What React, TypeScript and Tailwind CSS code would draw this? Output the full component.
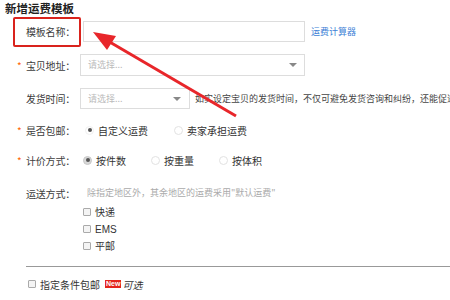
import React from 'react';

const FONT = { fontFamily: '"Noto Sans CJK SC", "Noto Sans", sans-serif' };

const Star = ({ show = true }: { show?: boolean }) => (
  <span className="w-[9px] text-[10px] leading-none text-[#f60] pt-[2px]">{show ? '*' : ''}</span>
);

const Label = ({ text, star = false }: { text: string; star?: boolean }) => (
  <div className="flex items-center w-[80px] shrink-0 pl-[17px]">
    <Star show={star} />
    <span className="text-[10px] text-[#3c3c3c] tracking-[-0.2px]">{text}</span>
  </div>
);

const Caret = () => (
  <span className="w-0 h-0 border-l-[4px] border-r-[4px] border-t-[4px] border-l-transparent border-r-transparent border-t-[#888]" />
);

const Select = ({ width, caretRight }: { width: string; caretRight: string }) => (
  <div className={`${width} shrink-0 h-full border border-[#ddd] bg-white flex items-center pl-[7px] ${caretRight}`}>
    <span className="flex-1 text-[9px] text-[#bbb]">请选择...</span>
    <Caret />
  </div>
);

const Radio = ({ checked = false, filled = false, label }: { checked?: boolean; filled?: boolean; label: string }) => (
  <div className="flex items-center gap-[4px]">
    <span
      className={`w-[9px] h-[9px] rounded-full border flex items-center justify-center ${
        filled ? 'bg-[#d8d8d8] border-[#c8c8c8]' : checked ? 'bg-white border-[#f0f0f0]' : 'bg-white border-[#e2e2e2]'
      }`}
    >
      {checked && <span className="w-[4px] h-[4px] rounded-full bg-[#555]" />}
    </span>
    <span className="text-[10px] text-[#333]">{label}</span>
  </div>
);

const Check = ({ label }: { label: string }) => (
  <div className="flex items-center gap-[4px] h-[16px] mt-[1px] pl-[83px]">
    <span className="w-[8px] h-[8px] border border-[#aaa] rounded-[1px] bg-[#f4f4f4]" />
    <span className="text-[10px] text-[#333]" style={{ fontFamily: '"Liberation Sans", "Noto Sans CJK SC", sans-serif' }}>{label}</span>
  </div>
);

export default function App() {
  return (
    <div className="relative w-[450px] h-[300px] bg-white overflow-hidden" style={FONT}>
      <div className="h-[16px] pl-[5px] pt-[1px] text-[11.5px] font-bold text-[#222] leading-[14px]">新增运费模板</div>

      <div className="flex items-center h-[21px] mt-[5px]">
        <Label text="模板名称：" />
        <div className="w-[222px] shrink-0 h-full border border-[#ddd] ml-[3px]" />
        <a className="ml-[6px] text-[9px] text-[#3d7fd6]">运费计算器</a>
      </div>

      <div className="flex items-center h-[22px] mt-[12px]">
        <Label text="宝贝地址：" star />
        <Select width="w-[225px]" caretRight="pr-[7px]" />
      </div>

      <div className="flex items-center h-[21px] mt-[12px]">
        <Label text="发货时间：" />
        <Select width="w-[110px]" caretRight="pr-[8px]" />
        <span className="ml-[5px] text-[9px] text-[#444] whitespace-nowrap">如实设定宝贝的发货时间，不仅可避免发货咨询和纠纷，还能促进成交</span>
      </div>

      <div className="flex items-center h-[20px] mt-[11px]">
        <Label text="是否包邮：" star />
        <div className="flex items-center gap-[26px] ml-[5px]">
          <Radio checked label="自定义运费" />
          <Radio label="卖家承担运费" />
        </div>
      </div>

      <div className="flex items-center h-[20px] mt-[10px]">
        <Label text="计价方式：" star />
        <div className="flex items-center gap-[25px] ml-[3px]">
          <Radio checked filled label="按件数" />
          <Radio label="按重量" />
          <Radio label="按体积" />
        </div>
      </div>

      <div className="flex items-center h-[20px] mt-[13px]">
        <Label text="运送方式：" />
        <span className="ml-[7px] text-[9px] text-[#aaa] whitespace-nowrap">除指定地区外，其余地区的运费采用"默认运费"</span>
      </div>

      <Check label="快递" />
      <Check label="EMS" />
      <Check label="平邮" />

      <div className="ml-[26px] mt-[12px] h-px bg-[#999]" />

      <div className="flex items-center h-[16px] mt-[9px] pl-[28px] gap-[4px]">
        <span className="w-[8px] h-[8px] border border-[#aaa] rounded-[1px] bg-[#f4f4f4]" />
        <span className="text-[10px] text-[#333]">指定条件包邮</span>
        <span className="ml-[1px] h-[8px] px-[1px] bg-[#e4241c] text-white text-[7px] leading-[8px] font-bold" style={{ fontFamily: '"Liberation Sans", sans-serif' }}>New</span>
        <span className="-ml-[3px] text-[10px] text-[#333] italic">可选</span>
      </div>

      {/* annotation overlay */}
      <div className="absolute left-[13px] top-[17px] w-[68px] h-[30px] border-2 border-[#d9231d] rounded-[2px]" />
      <svg className="absolute left-0 top-0 pointer-events-none" width="450" height="300">
        <line x1="108" y1="41" x2="236" y2="116" stroke="#e8262a" strokeWidth="3" />
        <polygon points="93,32 107,50 116,36" fill="#e8262a" />
      </svg>
    </div>
  );
}
